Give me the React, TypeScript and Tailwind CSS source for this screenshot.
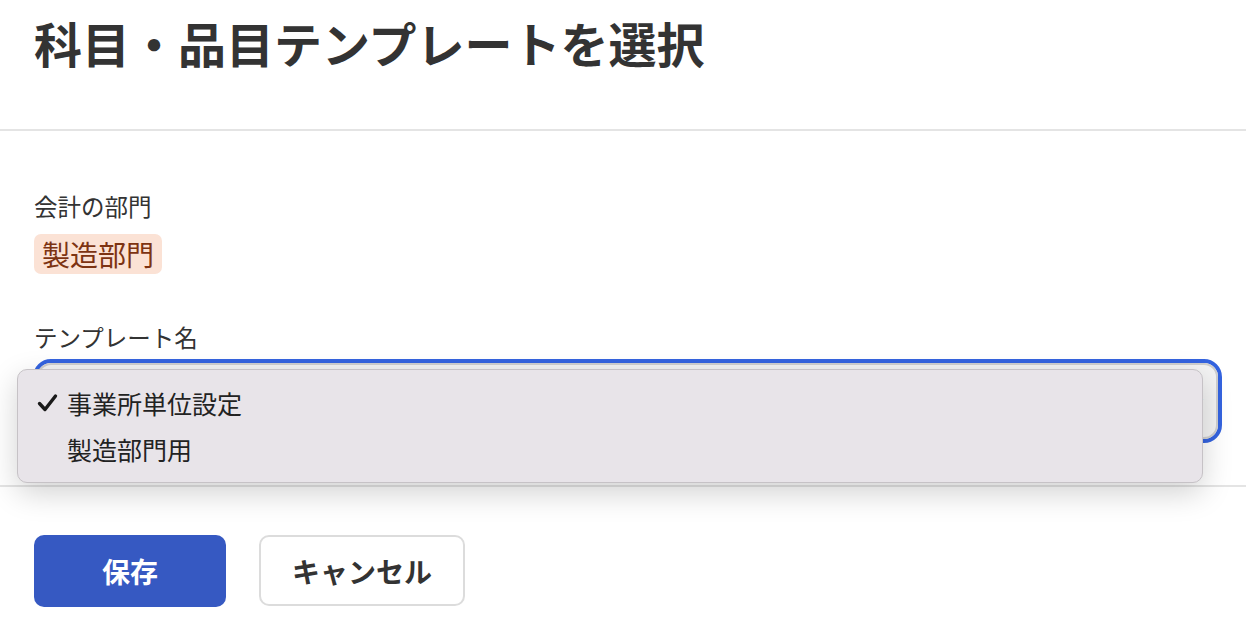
const font = { fontFamily: '"Noto Sans CJK JP", "Noto Sans", sans-serif' };

function CheckIcon() {
  return (
    <svg width="21" height="20" viewBox="0 0 21 20" className="shrink-0">
      <path d="M2.5 10.5 L8 16.5 L18.5 3" fill="none" stroke="#1a1a1a" strokeWidth="3.4" strokeLinecap="round" strokeLinejoin="round" />
    </svg>
  );
}

export default function App() {
  return (
    <div className="relative h-[624px] w-[1246px] overflow-hidden bg-white text-[#333]" style={font}>
      <header className="h-[131px] border-b-2 border-[#e4e4e4] px-[34px] pt-[18px]">
        <h1 className="text-[48px] font-bold leading-none">科目・品目テンプレートを選択</h1>
      </header>

      <section className="relative pr-[24px] pl-[34px] pt-[64px]">
        <div className="text-[23.5px] leading-none text-[#333]">会計の部門</div>
        <div className="mt-[15px] inline-flex h-[40px] items-center rounded-[7px] bg-[#fbe2d5] px-[8px] text-[28px] leading-none text-[#7d3312]">
          製造部門
        </div>

        <div className="mt-[52px] text-[23.5px] leading-none text-[#333]">テンプレート名</div>
        <div className="mt-[10px] -ml-[1px] h-[84px] rounded-[18px] border-[4px] border-[#3463df] p-0">
          <div className="flex h-full items-center justify-end rounded-[14px] border-2 border-[#cfcfcf] bg-[#f3f3f3] pr-[10px]">
            <span className="text-[14px] text-[#555]">⌃</span>
          </div>
        </div>

        <div className="absolute left-[17px] top-[238px] h-[114px] w-[1186px] rounded-[10px] border border-[#c6c2c6] bg-[#e8e4e9] pt-[18px] shadow-[0_10px_30px_rgba(0,0,0,0.18)]">
          <div className="flex h-[30px] items-center pl-[19px] text-[25px] leading-none text-[#222]">
            <CheckIcon />
            <span className="ml-[9px]">事業所単位設定</span>
          </div>
          <div className="mt-[16px] flex h-[30px] items-center pl-[49px] text-[25px] leading-none text-[#222]">
            製造部門用
          </div>
        </div>
      </section>

      <div className="mt-[42px] border-t-2 border-[#e4e4e4]" />

      <footer className="flex gap-[33px] px-[34px] pt-[48px]">
        <button className="h-[72px] w-[192px] rounded-[10px] bg-[#3659c2] text-[28px] font-bold text-white">保存</button>
        <button className="h-[71px] w-[206px] rounded-[10px] border-2 border-[#dcdcdc] bg-white text-[28px] font-bold text-[#333]">
          キャンセル
        </button>
      </footer>
    </div>
  );
}
